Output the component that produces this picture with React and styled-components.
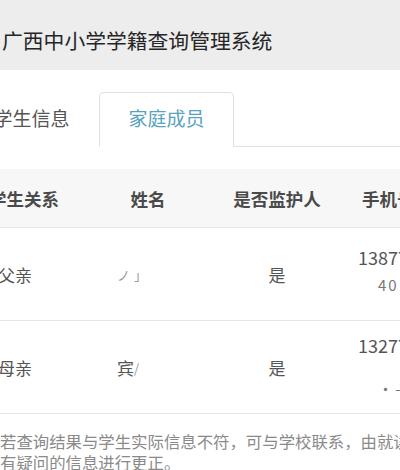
import React from "react";
import styled, { createGlobalStyle } from "styled-components";

const Global = createGlobalStyle`
  html, body { margin: 0; padding: 0; background: #fff; }
  body { font-family: "Noto Sans CJK SC", "Noto Sans", sans-serif; }
`;

const Viewport = styled.div`
  width: 400px;
  height: 470px;
  overflow: hidden;
  background: #fff;
`;

const Page = styled.div`
  width: 480px;
  margin-left: -36px;
`;

const TopBar = styled.header`
  height: 70px;
  background: #ededed;
  display: flex;
  align-items: center;
  padding-left: 38px;
  padding-top: 10px;
  box-sizing: border-box;
`;

const Title = styled.h1`
  margin: 0;
  font-size: 20.8px;
  font-weight: 400;
  color: #262626;
`;

const Tabs = styled.nav`
  margin-top: 22px;
  display: flex;
  border-bottom: 1px solid #e2e2e2;
`;

const Tab = styled.div`
  width: 135px;
  height: 55px;
  box-sizing: border-box;
  display: flex;
  align-items: center;
  justify-content: center;
  font-size: 19px;
  margin-bottom: -1px;
  color: ${(p) => (p.$active ? "#58a3bd" : "#555")};
  background: #fff;
  border: 1px solid ${(p) => (p.$active ? "#e0e0e0" : "transparent")};
  border-bottom-color: ${(p) => (p.$active ? "#fff" : "transparent")};
  border-radius: 5px 5px 0 0;
  padding-bottom: 4px;
`;

const Table = styled.div`
  margin-top: 22px;
  display: grid;
  grid-template-columns: 136px 96px 162px 1fr;
`;

const HeadCell = styled.div`
  height: 59px;
  box-sizing: border-box;
  background: #f7f7f7;
  border-bottom: 1px solid #e6e6e6;
  display: flex;
  align-items: center;
  justify-content: ${(p) => p.$justify || "flex-start"};
  padding-left: ${(p) => p.$pad || 0}px;
  font-size: 17.5px;
  font-weight: 700;
  color: #4a4a4a;
  white-space: nowrap;
`;

const Cell = styled.div`
  height: 93px;
  box-sizing: border-box;
  border-bottom: 1px solid #e6e6e6;
  display: flex;
  align-items: center;
  justify-content: ${(p) => p.$justify || "flex-start"};
  padding-left: ${(p) => p.$pad || 0}px;
  font-size: 17px;
  color: #555;
  white-space: nowrap;
`;

const Faint = styled.span`
  color: #9a9a9a;
  font-size: 13px;
  margin-left: ${(p) => p.$gap || 0}px;
`;

const Phone = styled.div`
  display: flex;
  flex-direction: column;
  font-size: 18px;
  line-height: ${(p) => p.$lh}px;
  color: #555;
  margin-top: ${(p) => p.$shift || 0}px;
`;

const PhoneTail = styled.span`
  padding-left: 20px;
  color: #777;
  font-size: 15px;
  letter-spacing: 2px;
`;

const Note = styled.p`
  margin: 17px 0 0 36px;
  width: 400px;
  font-size: 16.4px;
  line-height: 21px;
  color: #8a8a8a;
  white-space: nowrap;
  overflow: hidden;
`;

export default function App() {
  return (
    <Viewport>
      <Global />
      <Page>
        <TopBar>
          <Title>广西中小学学籍查询管理系统</Title>
        </TopBar>
        <Tabs>
          <Tab>学生信息</Tab>
          <Tab $active>家庭成员</Tab>
        </Tabs>
        <Table>
          <HeadCell $pad={25}>学生关系</HeadCell>
          <HeadCell $justify="center">姓名</HeadCell>
          <HeadCell $justify="center">是否监护人</HeadCell>
          <HeadCell $pad={4}>手机号码</HeadCell>

          <Cell $pad={34}>父亲</Cell>
          <Cell $pad={17}>
            <Faint>ノ</Faint>
            <Faint $gap={4}>」</Faint>
          </Cell>
          <Cell $justify="center">是</Cell>
          <Cell>
            <Phone $lh={27} $shift={-6}>
              <span>13877</span>
              <PhoneTail>40</PhoneTail>
            </Phone>
          </Cell>

          <Cell $pad={34}>母亲</Cell>
          <Cell $pad={17}>
            宾<Faint>/</Faint>
          </Cell>
          <Cell $justify="center">是</Cell>
          <Cell>
            <Phone $lh={22}>
              <span>13277</span>
              <span>&nbsp;</span>
              <PhoneTail>·–—</PhoneTail>
            </Phone>
          </Cell>
        </Table>
        <Note>
          若查询结果与学生实际信息不符，可与学校联系，由就读学校
          <br />
          有疑问的信息进行更正。
        </Note>
      </Page>
    </Viewport>
  );
}
